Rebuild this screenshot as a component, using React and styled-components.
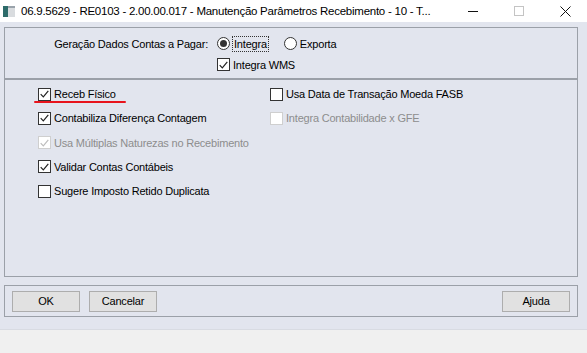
import { createGlobalStyle, styled } from "styled-components";

const GlobalStyle = createGlobalStyle`
  html, body {
    margin: 0;
    padding: 0;
    background: #f0f0f0;
  }
  body {
    font-family: "Liberation Sans", Arial, sans-serif;
    font-size: 11px;
    letter-spacing: -0.2px;
    color: #000;
  }
`;

const Window = styled.div`
  width: 587px;
  height: 353px;
  display: flex;
  flex-direction: column;
  background: #f0f0f0;
  overflow: hidden;
`;

const TitleBar = styled.div`
  height: 22px;
  flex: none;
  display: flex;
  align-items: center;
  background: #fff;
`;

const AppIcon = styled.svg`
  width: 12px;
  height: 11px;
  margin: 0 6px 0 3px;
  flex: none;
`;

const Title = styled.div`
  flex: 1;
  font-size: 11.5px;
  letter-spacing: -0.25px;
  white-space: nowrap;
`;

const Controls = styled.div`
  display: flex;
  align-items: center;
  height: 100%;
  flex: none;
  margin-right: -1px;
`;

const ControlButton = styled.div`
  width: 46px;
  height: 100%;
  display: flex;
  align-items: center;
  justify-content: center;
  color: ${(p) => (p.$disabled ? "#c4c4c4" : "#111")};
`;

const Body = styled.div`
  height: 308px;
  flex: none;
  background: #e2e5ee;
  padding: 5px 9px 0 4px;
  box-sizing: border-box;
  border-bottom: 1px solid #d8dbe2;
`;

const Group = styled.div`
  border: 1px solid #9ba0a8;
  box-sizing: border-box;
`;

const TopGroup = styled(Group)`
  height: 52px;
  display: grid;
  grid-template-columns: 203px auto;
  grid-template-rows: 21px 21px;
  column-gap: 9px;
  align-items: center;
  padding-top: 5px;
`;

const FieldLabel = styled.div`
  text-align: right;
  padding-top: 1px;
`;

const RadioRow = styled.div`
  display: flex;
  align-items: center;
  gap: 16px;
`;

const Choice = styled.label`
  display: flex;
  align-items: center;
  gap: 3px;
  white-space: nowrap;
  position: relative;
  color: ${(p) => (p.$disabled ? "#8d8d8d" : "#000")};
`;

const Focus = styled.span`
  outline: 1px dotted #333;
  outline-offset: 0;
  padding: 0 1px;
  line-height: 14px;
`;

const Radio = styled.span`
  width: 11px;
  height: 11px;
  border: 1px solid #333;
  border-radius: 50%;
  background: #fff;
  display: flex;
  align-items: center;
  justify-content: center;
  flex: none;
  &::after {
    content: "";
    width: 7px;
    height: 7px;
    border-radius: 50%;
    background: ${(p) => (p.$checked ? "#333" : "transparent")};
  }
`;

const Box = styled.span`
  width: 11px;
  height: 11px;
  border: 1px solid ${(p) => (p.$disabled ? "#cfcfcf" : "#333")};
  background: #fff;
  flex: none;
  display: flex;
  align-items: center;
  justify-content: center;
`;

const OptionsGroup = styled(Group)`
  height: 198px;
  display: grid;
  grid-template-columns: 232px auto;
  padding: 2px 0 0 33px;
  align-content: start;
`;

const Column = styled.div`
  display: flex;
  flex-direction: column;
`;

const OptionRow = styled.div`
  height: 24.25px;
  display: flex;
  align-items: center;
`;

const Underline = styled.span`
  position: absolute;
  left: -4px;
  top: 13px;
  width: 92px;
  height: 2.5px;
  border-radius: 2px;
  background: #e8141c;
`;

const ButtonGroup = styled(Group)`
  margin-top: 8px;
  height: 32px;
  display: flex;
  align-items: center;
  padding: 0 7px;
  gap: 9px;
`;

const Button = styled.button`
  width: 68px;
  height: 21px;
  background: #e1e1e1;
  border: 1px solid #adadad;
  font: inherit;
  letter-spacing: inherit;
  color: #000;
  padding: 0;
  margin-left: ${(p) => (p.$push ? "auto" : "0")};
`;

const Check = ({ checked, disabled }) => (
  <Box $disabled={disabled}>
    {checked && (
      <svg width="9" height="8" viewBox="0 0 9 8">
        <path
          d="M0.7 4.2 L3.3 6.8 L8.3 0.8"
          fill="none"
          stroke={disabled ? "#bdbdbd" : "#222"}
          strokeWidth="1.2"
        />
      </svg>
    )}
  </Box>
);

const Option = ({ label, checked, disabled, mark }) => (
  <OptionRow>
    <Choice $disabled={disabled}>
      <Check checked={checked} disabled={disabled} />
      {label}
      {mark && <Underline />}
    </Choice>
  </OptionRow>
);

const App = () => {
  return (
    <>
      <GlobalStyle />
      <Window>
        <TitleBar>
          <AppIcon viewBox="0 0 12 11">
            <rect x="0" y="0" width="12" height="11" fill="#d9dcdf" />
            <rect x="0" y="0" width="5" height="11" fill="#2d6b6a" />
            <rect x="5" y="0" width="7" height="2" fill="#9aa3ab" />
          </AppIcon>
          <Title>
            06.9.5629 - RE0103 - 2.00.00.017 - Manutenção Parâmetros Recebimento - 10 - T...
          </Title>
          <Controls>
            <ControlButton>
              <svg width="10" height="10" viewBox="0 0 10 10">
                <path d="M0 5.5 H10" stroke="currentColor" strokeWidth="1" />
              </svg>
            </ControlButton>
            <ControlButton $disabled>
              <svg width="10" height="10" viewBox="0 0 10 10">
                <rect x="0.5" y="0.5" width="9" height="9" fill="none" stroke="currentColor" />
              </svg>
            </ControlButton>
            <ControlButton>
              <svg width="11" height="11" viewBox="0 0 11 11">
                <path d="M0.5 0.5 L10.5 10.5 M10.5 0.5 L0.5 10.5" stroke="currentColor" strokeWidth="1" />
              </svg>
            </ControlButton>
          </Controls>
        </TitleBar>
        <Body>
          <TopGroup>
            <FieldLabel>Geração Dados Contas a Pagar:</FieldLabel>
            <RadioRow>
              <Choice>
                <Radio $checked />
                <Focus>Integra</Focus>
              </Choice>
              <Choice>
                <Radio />
                Exporta
              </Choice>
            </RadioRow>
            <span />
            <Choice>
              <Check checked />
              Integra WMS
            </Choice>
          </TopGroup>
          <OptionsGroup>
            <Column>
              <Option label="Receb Físico" checked mark />
              <Option label="Contabiliza Diferença Contagem" checked />
              <Option label="Usa Múltiplas Naturezas no Recebimento" checked disabled />
              <Option label="Validar Contas Contábeis" checked />
              <Option label="Sugere Imposto Retido Duplicata" />
            </Column>
            <Column>
              <Option label="Usa Data de Transação Moeda FASB" />
              <Option label="Integra Contabilidade x GFE" disabled />
            </Column>
          </OptionsGroup>
          <ButtonGroup>
            <Button>OK</Button>
            <Button>Cancelar</Button>
            <Button $push>Ajuda</Button>
          </ButtonGroup>
        </Body>
      </Window>
    </>
  );
};

export default App;
